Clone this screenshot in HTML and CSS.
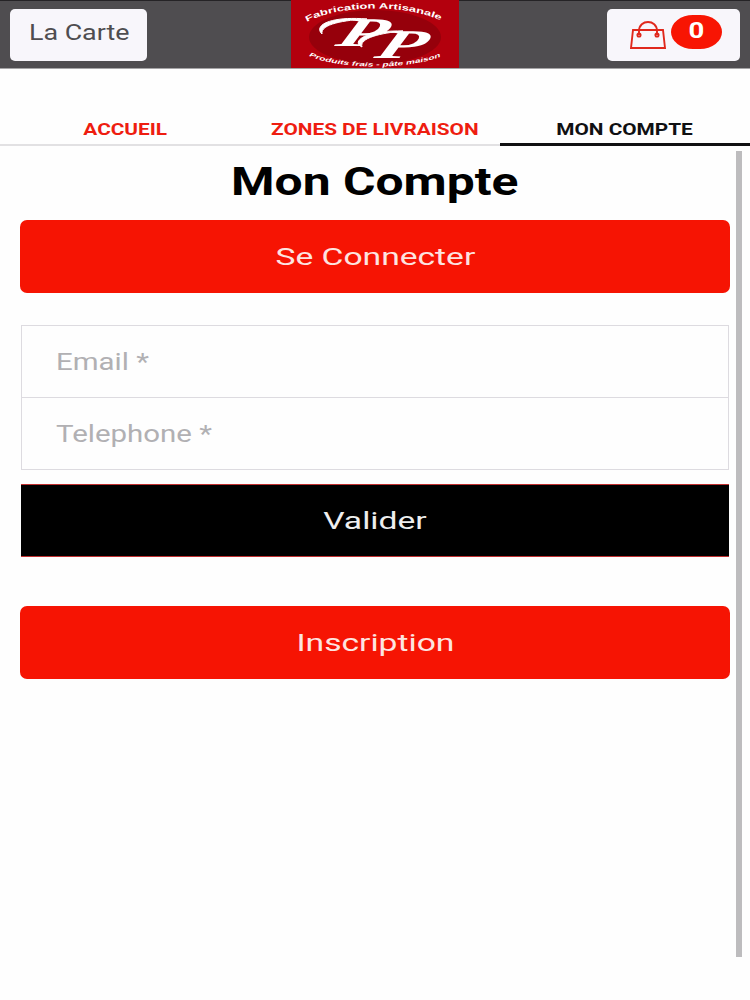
FILE: index.html
```
<!DOCTYPE html>
<html lang="fr">
<head>
  <meta charset="UTF-8">
  <meta name="viewport" content="width=device-width, initial-scale=1.0">
  <title>Mon Compte</title>
  <link rel="stylesheet" href="styles.css">
</head>
<body>
  <header class="topbar">
    <button class="btn-carte"><span class="wide">La Carte</span></button>

    <svg class="logo" viewBox="0 0 168 68" width="168" height="68">
      <defs>
        <path id="arc-top" d="M16 22 C48 4 120 4 152 22"/>
        <path id="arc-bottom" d="M18 56 C50 70 118 70 151 56"/>
      </defs>
      <rect width="168" height="68" fill="#b3000d"/>
      <ellipse cx="84" cy="37" rx="66" ry="27" fill="#96000b"/>
      <text class="logo-text"><textPath href="#arc-top" textLength="137" lengthAdjust="spacingAndGlyphs">Fabrication Artisanale</textPath></text>
      <text class="logo-text small"><textPath href="#arc-bottom" textLength="134" lengthAdjust="spacingAndGlyphs">Produits frais - pâte maison</textPath></text>
      <text class="logo-letter" transform="translate(43 46) skewX(-22) scale(1.95 1)">P</text>
      <text class="logo-letter" transform="translate(82 58) skewX(-22) scale(1.95 1)">P</text>
      <g class="logo-swash">
        <path d="M31 34 C22 25 40 16 76 19 C54 20 29 24 31 34 Z"/>
        <path d="M71 47 C60 42 73 30 112 31 C90 33 68 38 71 47 Z"/>
      </g>
    </svg>

    <button class="btn-panier">
      <svg class="bag" viewBox="0 0 36 28" width="36" height="28">
        <path d="M3 9 H33 L35 27 H1 Z"/>
        <path d="M9 14 V10 C9 -2 27 -2 27 10 V14"/>
        <circle cx="9" cy="14" r="1.6"/>
        <circle cx="27" cy="14" r="1.6"/>
      </svg>
      <span class="badge"><span class="wide">0</span></span>
    </button>
  </header>

  <nav class="tabs">
    <a class="tab"><span class="wide">ACCUEIL</span></a>
    <a class="tab"><span class="wide">ZONES DE LIVRAISON</span></a>
    <a class="tab active"><span class="wide">MON COMPTE</span></a>
  </nav>

  <div class="page">
    <main class="content">
      <h1><span class="wide">Mon Compte</span></h1>
      <button class="btn-red"><span class="wide">Se Connecter</span></button>

      <form class="login">
        <label class="field"><span class="wide">Email *</span></label>
        <label class="field"><span class="wide">Telephone *</span></label>
        <button type="button" class="btn-valider"><span class="wide">Valider</span></button>
      </form>

      <button class="btn-red"><span class="wide">Inscription</span></button>
    </main>
    <div class="scrollbar"></div>
  </div>
</body>
</html>
```
FILE: styles.css
```
* {
  box-sizing: border-box;
}

body {
  margin: 0;
  height: 1000px;
  overflow: hidden;
  background: #fefefe;
  font-family: Roboto, "Liberation Sans", sans-serif;
}

button {
  border: none;
  padding: 0;
  font-family: inherit;
  cursor: pointer;
}

/* texte élargi horizontalement */
.wide {
  display: inline-block;
  white-space: nowrap;
  transform: scaleX(1.4);
}

.topbar {
  display: flex;
  justify-content: space-between;
  height: 69px;
  padding: 0 10px;
  background: #4f4d50;
  border-top: 1px solid #252326;
  border-bottom: 1px solid #a5a4a6;
}

.btn-carte {
  width: 137px;
  height: 52px;
  margin-top: 8px;
  padding: 0 0 5px 2px;
  border-radius: 5px;
  background: #f8f6fb;
  color: #4f4d50;
  font-size: 22px;
}

.btn-carte .wide {
  transform: scaleX(1.22);
}

.logo {
  margin-top: -1px;
  margin-left: -4px;
}

.logo-text {
  fill: #fff;
  font-family: "Liberation Sans", sans-serif;
  font-weight: bold;
  font-size: 8px;
}

.logo-text.small {
  font-size: 6px;
  font-style: italic;
}

.logo-letter {
  fill: #fff;
  font-family: "Liberation Serif", serif;
  font-size: 41px;
  font-style: italic;
  font-weight: bold;
}

.logo-swash {
  fill: #fff;
  stroke: #fff;
  stroke-width: 1;
}

.btn-panier {
  display: flex;
  gap: 5px;
  width: 133px;
  height: 52px;
  margin-top: 8px;
  padding: 6px 0 0 23px;
  border-radius: 5px;
  background: #f8f6fb;
}

.bag {
  margin-top: 6px;
  fill: none;
  stroke: #e0281c;
  stroke-width: 1.9;
}

.badge {
  width: 51px;
  height: 34px;
  border-radius: 22px / 17px;
  background: #f81503;
  color: #fff;
  font-size: 22px;
  font-weight: bold;
  line-height: 32px;
  text-align: center;
}

.badge .wide {
  transform: scaleX(1.25);
}

.tabs {
  display: grid;
  grid-template-columns: repeat(3, 1fr);
  height: 78px;
}

.tab {
  height: 77px;
  padding-top: 50px;
  border-bottom: 2px solid #e2e1e3;
  color: #ee1d10;
  font-size: 16px;
  font-weight: bold;
  line-height: 21px;
  text-align: center;
}

.tab .wide {
  transform: scaleX(1.3);
}

.tab.active {
  border-bottom: 3px solid #101012;
  color: #101012;
}

.page {
  display: flex;
}

.content {
  display: flex;
  flex-direction: column;
  width: 736px;
  padding: 0 6px 0 20px;
}

h1 {
  margin: 13px 0 15px;
  font-size: 38px;
  line-height: 45px;
  text-align: center;
}

h1 .wide {
  transform: scaleX(1.31);
}

.btn-red {
  height: 73px;
  border-radius: 7px;
  background: #f61403;
  color: #fde4e0;
  font-size: 24px;
}

.login {
  display: flex;
  flex-direction: column;
  margin: 32px 1px 49px;
}

.field {
  height: 73px;
  padding-left: 34px;
  border: 1px solid #dddbe0;
  color: #b1b0b3;
  font-size: 23px;
  line-height: 74px;
}

.field + .field {
  margin-top: -1px;
}

.field .wide {
  transform: scaleX(1.28);
  transform-origin: left;
}

.btn-valider {
  height: 73px;
  margin-top: 14px;
  border-top: 1px solid #c03030;
  border-bottom: 1px solid #c03030;
  background: #000;
  color: #eee;
  font-size: 24px;
}

.scrollbar {
  width: 6px;
  height: 806px;
  margin-top: 4px;
  background: #bdbcbe;
}
```
